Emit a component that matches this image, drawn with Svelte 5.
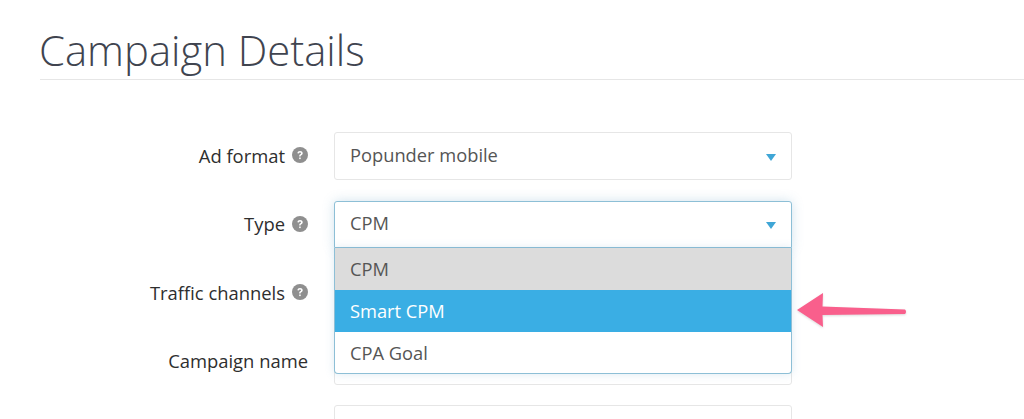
<script>
  const rows = [
    { label: 'Ad format', help: true, value: 'Popunder mobile', kind: 'select' },
    { label: 'Type', help: true, value: 'CPM', kind: 'open' },
    { label: 'Traffic channels', help: true, value: '', kind: 'select' },
    { label: 'Campaign name', help: false, value: '', kind: 'input' },
    { label: '', help: false, value: '', kind: 'input' }
  ];
  const options = ['CPM', 'Smart CPM', 'CPA Goal'];
</script>

<div class="page">
  <h1>Campaign Details</h1>
  <form class="form">
    {#each rows as row}
      <div class="row">
        <div class="label" class:plain={!row.help}>
          <span>{row.label}</span>
          {#if row.help}
            <svg class="help" viewBox="0 0 16 16" aria-hidden="true">
              <circle cx="8" cy="8" r="8" fill="#8f8f8f" />
              <path d="M5.400 6.200C5.500 4.700 6.600 4 8 4c1.500 0 2.700.8 2.700 2.200 0 1.100-.7 1.600-1.400 2-.5.3-.7.5-.7 1v.3H7.200v-.5c0-.9.4-1.300 1.100-1.800.5-.3.8-.5.8-1 0-.5-.4-.8-1.100-.8-.7 0-1.100.4-1.200 1z" fill="#fff" />
              <rect x="7.200" y="10.500" width="1.500" height="1.600" fill="#fff" />
            </svg>
          {/if}
        </div>
        <div class="field" class:open={row.kind === 'open'} class:text={row.kind === 'input'}>
          <div class="control">
            <span>{row.value}</span>
            {#if row.kind !== 'input'}<i class="caret"></i>{/if}
          </div>
          {#if row.kind === 'open'}
            <ul class="menu">
              {#each options as option, i}
                <li class:current={i === 0} class:hover={i === 1}>{option}</li>
              {/each}
            </ul>
            <svg class="pointer" viewBox="0 0 116 44" aria-hidden="true">
              <path d="M4 19 L30 2 L29.500 15.500 L112 18.500 Q114 20.500 112 23 L29.500 24 L30 36 Z" fill="#f95f8c" />
            </svg>
          {/if}
        </div>
      </div>
    {/each}
  </form>
</div>

<style>
  :global(body) {
    margin: 0;
    background: #fff;
    overflow: hidden;
  }
  .page {
    height: 419px;
    overflow: hidden;
    padding-left: 40px;
    font-family: "Open Sans", sans-serif;
    color: #333;
  }
  h1 {
    margin: 0;
    box-sizing: content-box;
    height: 58px;
    padding-top: 21px;
    border-bottom: 1px solid #e6e6e6;
    font-size: 41.800px;
    line-height: 58px;
    font-weight: 300;
    color: #40444f;
    text-indent: -1px;
  }
  .form {
    display: flex;
    flex-direction: column;
    gap: 20.500px;
    padding-top: 52px;
  }
  .row {
    display: flex;
    align-items: center;
    gap: 26px;
  }
  .label {
    width: 268px;
    display: flex;
    justify-content: flex-end;
    align-items: center;
    gap: 7px;
    font-size: 18.400px;
    flex: none;
    padding-bottom: 2px;
    color: #2e2e2e;
  }
  .help {
    width: 16px;
    height: 16px;
    flex: none;
  }
  .field {
    position: relative;
    width: 458px;
  }
  .control {
    height: 46px;
    box-sizing: content-box;
    border: 1px solid #e6e6e6;
    border-radius: 3px;
    display: flex;
    align-items: center;
    justify-content: space-between;
    padding: 0 15px;
    font-size: 18.300px;
    color: #555;
    background: #fff;
  }
  .text .control {
    height: 45px;
  }
  .control span {
    margin-bottom: 3px;
  }
  .caret {
    width: 0;
    height: 0;
    border-left: 5px solid transparent;
    border-right: 5px solid transparent;
    border-top: 7px solid #3fa6d6;
    margin-top: 2px;
  }
  .open .control {
    height: 45px;
    margin-bottom: 1px;
    border-color: #8dbfd6;
    box-shadow: 0 0 12px rgba(90, 150, 190, .28);
    border-bottom-left-radius: 0;
    border-bottom-right-radius: 0;
    position: relative;
  }
  .menu {
    position: absolute;
    z-index: 2;
    top: 47px;
    left: 0;
    right: 0;
    margin: 0;
    padding: 0;
    list-style: none;
    background: #fff;
    border: 1px solid #8dbfd6;
    border-top: 0;
    border-radius: 0 0 4px 4px;
    box-shadow: 0 0 10px rgba(90, 150, 190, .2);
    overflow: hidden;
    font-size: 18.300px;
    color: #555;
  }
  .menu li {
    height: 42px;
    line-height: 41px;
    padding: 0 15px;
  }
  .menu li:last-child {
    height: 41px;
  }
  .menu li.current {
    background: #dcdcdc;
  }
  .menu li.hover {
    background: #3aaee4;
    color: #fff;
  }
  .pointer {
    position: absolute;
    z-index: 3;
    left: 459px;
    top: 90px;
    width: 116px;
    height: 44px;
    filter: drop-shadow(0 1px 1px rgba(0, 0, 0, .15));
  }
</style>
